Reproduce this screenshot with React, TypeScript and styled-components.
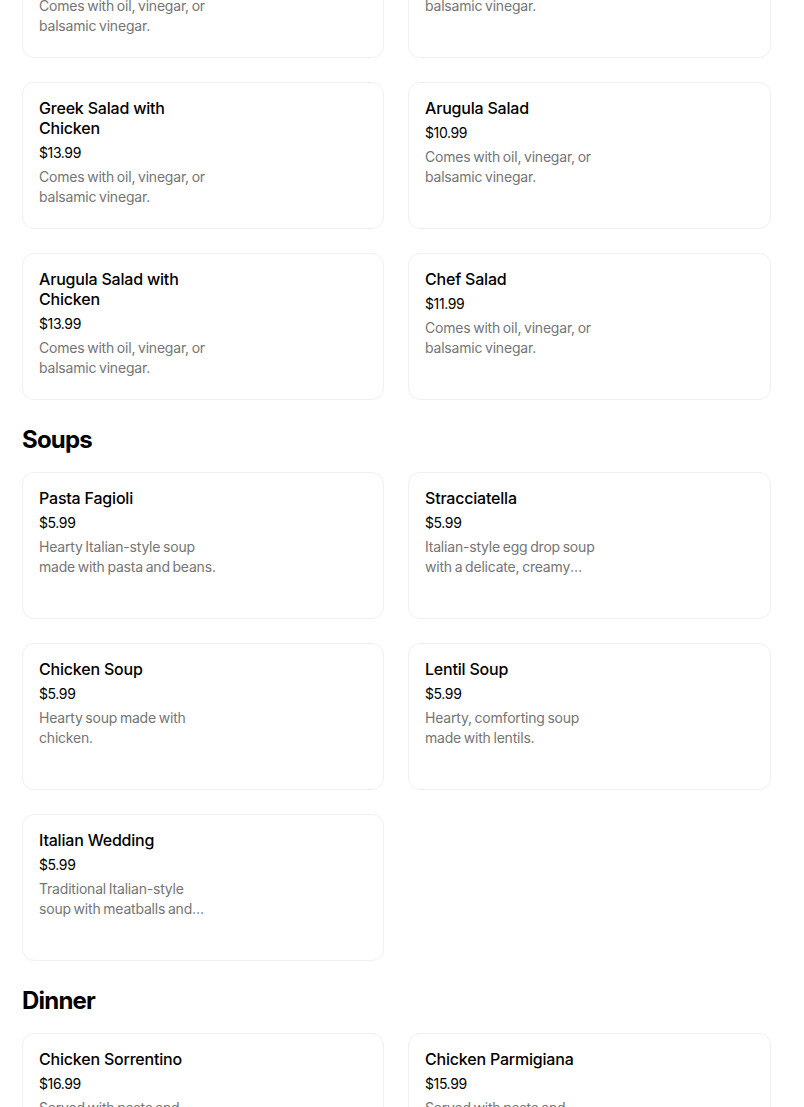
import React from 'react';
import styled, { createGlobalStyle } from 'styled-components';

interface MenuItem {
  name: string;
  price: string;
  description: string;
}

interface MenuSection {
  title?: string;
  items: MenuItem[];
}

const oilVinegar = 'Comes with oil, vinegar, or balsamic vinegar.';

const sections: MenuSection[] = [
  {
    items: [
      { name: 'Caesar Salad with Chicken', price: '$13.99', description: oilVinegar },
      { name: 'Greek Salad', price: '$10.99', description: oilVinegar },
      { name: 'Greek Salad with Chicken', price: '$13.99', description: oilVinegar },
      { name: 'Arugula Salad', price: '$10.99', description: oilVinegar },
      { name: 'Arugula Salad with Chicken', price: '$13.99', description: oilVinegar },
      { name: 'Chef Salad', price: '$11.99', description: oilVinegar },
    ],
  },
  {
    title: 'Soups',
    items: [
      { name: 'Pasta Fagioli', price: '$5.99', description: 'Hearty Italian-style soup made with pasta and beans.' },
      {
        name: 'Stracciatella',
        price: '$5.99',
        description: 'Italian-style egg drop soup with a delicate, creamy broth and parmesan cheese.',
      },
      { name: 'Chicken Soup', price: '$5.99', description: 'Hearty soup made with chicken.' },
      { name: 'Lentil Soup', price: '$5.99', description: 'Hearty, comforting soup made with lentils.' },
      {
        name: 'Italian Wedding',
        price: '$5.99',
        description: 'Traditional Italian-style soup with meatballs and leafy greens.',
      },
    ],
  },
  {
    title: 'Dinner',
    items: [
      { name: 'Chicken Sorrentino', price: '$16.99', description: 'Served with pasta and bread.' },
      { name: 'Chicken Parmigiana', price: '$15.99', description: 'Served with pasta and bread.' },
    ],
  },
];

const GlobalStyle = createGlobalStyle`
  body {
    margin: 0;
    background: #ffffff;
    font-family: Inter, "Noto Sans", sans-serif;
    color: #000000;
    overflow: hidden;
  }
`;

const Page = styled.div`
  padding: 0 33px 0 22px;
  margin-top: -89px;
`;

const SectionTitle = styled.h2`
  margin: 24px 0 16px;
  font-size: 24px;
  line-height: 32px;
  font-weight: 700;
  letter-spacing: -0.8px;
`;

const Grid = styled.div`
  display: grid;
  grid-template-columns: 362px 1fr;
  gap: 24px;
`;

const Card = styled.div`
  min-height: 147px;
  box-sizing: border-box;
  border: 1px solid #f0f0f0;
  border-radius: 12px;
  padding: 15px 16px 16px;
  display: flex;
  flex-direction: column;
`;

const ItemName = styled.div`
  max-width: 185px;
  font-size: 16px;
  line-height: 20px;
  font-weight: 500;
  letter-spacing: -0.2px;
`;

const Price = styled.div`
  margin-top: 5px;
  font-size: 14px;
  line-height: 20px;
  letter-spacing: -0.4px;
`;

const Description = styled.div`
  margin-top: 4px;
  max-width: 179px;
  font-size: 14px;
  line-height: 20px;
  color: #757575;
  letter-spacing: -0.2px;
  word-spacing: -1px;
  display: -webkit-box;
  -webkit-line-clamp: 2;
  -webkit-box-orient: vertical;
  overflow: hidden;
`;

const App: React.FC = () => (
  <>
    <GlobalStyle />
    <Page>
      {sections.map((section, i) => (
        <section key={i}>
          {section.title && <SectionTitle>{section.title}</SectionTitle>}
          <Grid>
            {section.items.map(item => (
              <Card key={item.name}>
                <ItemName>{item.name}</ItemName>
                <Price>{item.price}</Price>
                <Description>{item.description}</Description>
              </Card>
            ))}
          </Grid>
        </section>
      ))}
    </Page>
  </>
);

export default App;
